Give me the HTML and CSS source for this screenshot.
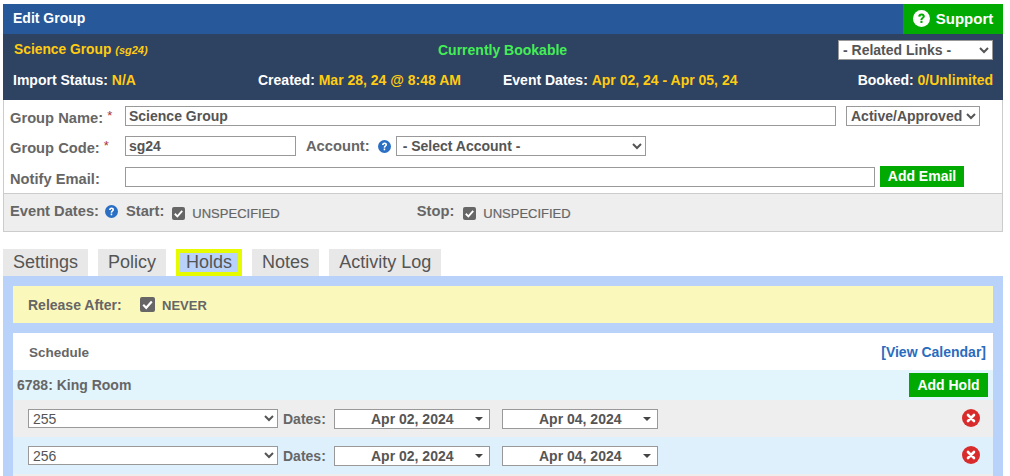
FILE: index.html
```html
<!DOCTYPE html>
<html lang="en">
<head>
    <meta charset="UTF-8">
    <title>Edit Group</title>
    <link rel="stylesheet" href="styles.css">
</head>
<body>
    <div class="page">
        <div class="title-bar">
            <span class="title">Edit Group</span>
            <a class="support">
                <svg class="support-icon" viewBox="0 0 16 16"><circle cx="8" cy="8" r="8" fill="#fff"/><path d="M4.900 6.200c0-1.900 1.400-2.900 3.200-2.900s3 1.100 3 2.600c0 2.100-2.200 2-2.200 3.500H7c0-2.400 2.100-2.300 2.100-3.400 0-.5-.4-.9-1-.9-.7 0-1.100.4-1.100 1.200zM7 10.200h1.900v2H7z" fill="#00aa00"/></svg>
                Support
            </a>
        </div>
        <div class="info">
            <div class="info-top">
                <div class="group-title">Science Group <i>(sg24)</i></div>
                <div class="bookable">Currently Bookable</div>
                <select class="related"><option>- Related Links -</option></select>
            </div>
            <div class="info-bottom">
                <span class="import">Import Status: <b>N/A</b></span>
                <span class="created">Created: <b>Mar 28, 24 @ 8:48 AM</b></span>
                <span class="dates">Event Dates: <b>Apr 02, 24 - Apr 05, 24</b></span>
                <span class="booked">Booked: <b>0/Unlimited</b></span>
            </div>
        </div>
        <div class="form">
            <div class="row row-name">
                <label class="lbl">Group Name: <span class="req">*</span></label>
                <input class="txt name-input" type="text" value="Science Group">
                <select class="status"><option>Active/Approved</option></select>
            </div>
            <div class="row row-code">
                <label class="lbl">Group Code: <span class="req">*</span></label>
                <input class="txt code-input" type="text" value="sg24">
                <label class="account-lbl">Account:</label>
                <svg class="help" viewBox="0 0 16 16"><use href="#help-icon"/></svg>
                <select class="account"><option>- Select Account -</option></select>
            </div>
            <div class="row row-email">
                <label class="lbl">Notify Email:</label>
                <input class="txt email-input" type="text">
                <button class="btn add-email">Add Email</button>
            </div>
        </div>
        <div class="event-dates">
            <span class="ev-lbl">Event Dates:</span>
            <svg class="help help-ev" viewBox="0 0 16 16"><use href="#help-icon"/></svg>
            <span class="start-lbl">Start:</span>
            <span class="check"><svg viewBox="0 0 14 14"><use href="#check-icon"/></svg></span>
            <span class="unspec start-unspec">UNSPECIFIED</span>
            <span class="stop-lbl">Stop:</span>
            <span class="check"><svg viewBox="0 0 14 14"><use href="#check-icon"/></svg></span>
            <span class="unspec">UNSPECIFIED</span>
        </div>

        <div class="tabs">
            <a class="tab">Settings</a>
            <a class="tab">Policy</a>
            <a class="tab active">Holds</a>
            <a class="tab">Notes</a>
            <a class="tab">Activity Log</a>
        </div>
        <div class="panel">
            <div class="release">
                <span class="release-lbl">Release After:</span>
                <span class="check check-lg"><svg viewBox="0 0 14 14"><use href="#check-icon"/></svg></span>
                <span class="unspec">NEVER</span>
            </div>
            <div class="schedule">
                <div class="schedule-head">
                    <span>Schedule</span>
                    <a class="cal-link">[View Calendar]</a>
                </div>
                <div class="room">
                    <span>6788: King Room</span>
                    <button class="btn add-hold">Add Hold</button>
                </div>
                <div class="hold hold-grey">
                    <select class="hold-select"><option>255</option></select>
                    <span class="dates-lbl">Dates:</span>
                    <div class="date">Apr 02, 2024<span class="caret"></span></div>
                    <div class="date">Apr 04, 2024<span class="caret"></span></div>
                    <svg class="del" viewBox="0 0 18 18"><use href="#del-icon"/></svg>
                </div>
                <div class="hold hold-blue">
                    <select class="hold-select"><option>256</option></select>
                    <span class="dates-lbl">Dates:</span>
                    <div class="date">Apr 02, 2024<span class="caret"></span></div>
                    <div class="date">Apr 04, 2024<span class="caret"></span></div>
                    <svg class="del" viewBox="0 0 18 18"><use href="#del-icon"/></svg>
                </div>
                <div class="hold-end"></div>
            </div>
        </div>
    </div>

    <svg class="defs" width="0" height="0">
        <defs>
            <g id="help-icon"><circle cx="8" cy="8" r="8" fill="#2a6fc4"/><path d="M4.900 6.100c0-1.900 1.400-3 3.200-3s3 1.100 3 2.700c0 2.100-2.200 2-2.200 3.600H7c0-2.500 2.100-2.400 2.100-3.500 0-.5-.4-.9-1-.9-.7 0-1.100.4-1.100 1.200zM7 10.400h1.900v2.200H7z" fill="#fff"/></g>
            <g id="check-icon"><path d="M3 7.300l2.800 2.800L11 4.200" fill="none" stroke="#fff" stroke-width="2"/></g>
            <g id="del-icon"><circle cx="9" cy="9" r="9" fill="#d82c2c"/><path d="M6 6l6 6M12 6l-6 6" stroke="#fff" stroke-width="2.600" stroke-linecap="round"/></g>
        </defs>
    </svg>
</body>
</html>
```

FILE: styles.css
```css
html, body {
    margin: 0;
    padding: 0;
    background: #fff;
    overflow: hidden;
    height: 476px;
}
body {
    font-family: "Liberation Sans", Arial, sans-serif;
    font-size: 14px;
    color: #666;
}
.defs {
    position: absolute;
}
.page {
    width: 1000px;
    height: 472px;
    margin: 0 0 0 3px;
    padding-top: 4px;
}
select, input, button {
    font-family: "Liberation Sans", Arial, sans-serif;
    box-sizing: border-box;
    margin: 0;
}
.title-bar {
    height: 30px;
    background: #27589a;
    display: flex;
    justify-content: space-between;
    align-items: center;
    color: #fff;
    font-weight: bold;
}
.title {
    padding-left: 10px;
    padding-bottom: 2px;
}
.support {
    width: 100px;
    height: 30px;
    background: #00aa00;
    display: flex;
    align-items: center;
    justify-content: center;
    gap: 6px;
    font-size: 15px;
    box-sizing: border-box;
    padding-bottom: 1px;
}
.support-icon {
    width: 17px;
    height: 17px;
}
.info {
    height: 66px;
    background: #2e4262;
    color: #fff;
    font-weight: bold;
    box-sizing: border-box;
    padding: 6px 10px 0 10px;
}
.info-top {
    display: flex;
    align-items: center;
    height: 20px;
}
.group-title {
    color: #ffcc11;
    width: 425px;
    padding-left: 1px;
    padding-bottom: 1px;
    box-sizing: border-box;
    font-size: 13.800px;
}
.group-title i {
    font-size: 11px;
}
.bookable {
    color: #44ee55;
    width: 400px;
}
.related {
    width: 155px;
    height: 20px;
    font-size: 14px;
    font-weight: bold;
    color: #555;
    background: #fff;
    border: 1px solid #999;
    border-radius: 0;
    padding: 0;
}
.info-bottom {
    display: flex;
    margin-top: 10px;
    height: 20px;
    align-items: center;
}
.info-bottom b {
    color: #ffcc11;
}
.import {
    width: 245px;
}
.created {
    width: 245px;
}
.dates {
    flex: 1;
}
.form {
    height: 93px;
    box-sizing: border-box;
    border-left: 1px solid #ccc;
    border-right: 1px solid #ccc;
    padding-top: 6px;
    font-weight: bold;
}
.row {
    display: flex;
    align-items: center;
    height: 20px;
}
.row-code {
    margin-top: 10px;
}
.row-email {
    margin-top: 11px;
}
.lbl {
    width: 121px;
    box-sizing: border-box;
    padding-left: 6px;
    padding-top: 3px;
    font-size: 14.700px;
    white-space: nowrap;
}
.req {
    color: #a33;
    font-size: 13px;
    font-weight: normal;
    position: relative;
    top: -3px;
}
.txt {
    height: 20px;
    border: 1px solid #999;
    padding: 0 3px;
    font-size: 14px;
    font-weight: bold;
    color: #555;
    border-radius: 0;
    outline: none;
}
.name-input {
    width: 711px;
}
.status {
    width: 134px;
    height: 20px;
    margin-left: 10px;
    font-size: 14px;
    font-weight: bold;
    color: #555;
    background: #fff;
    border: 1px solid #999;
    border-radius: 0;
    padding: 0;
}
.code-input {
    width: 171px;
}
.account-lbl {
    margin-left: 10px;
    font-size: 14.700px;
}
.help {
    width: 13px;
    height: 13px;
    margin-left: 8px;
    flex: none;
}
.account {
    width: 250px;
    height: 20px;
    margin-left: 5px;
    font-size: 14px;
    font-weight: bold;
    color: #555;
    background: #fff;
    border: 1px solid #999;
    border-radius: 0;
    padding: 0 2px;
}
.email-input {
    width: 750px;
}
.btn {
    background: #00aa00;
    color: #fff;
    border: none;
    font-size: 14px;
    font-weight: bold;
    border-radius: 0;
    padding: 0;
}
.add-email {
    width: 84px;
    height: 21px;
    margin-left: 5px;
    margin-top: -2px;
}
.event-dates {
    height: 39px;
    background: #eee;
    border: 1px solid #ccc;
    box-sizing: border-box;
    display: flex;
    align-items: center;
    font-weight: bold;
    font-size: 14.700px;
    padding-left: 6px;
    padding-bottom: 3px;
}
.help-ev {
    margin-left: 6px;
}
.start-lbl {
    margin-left: 8px;
}
.stop-lbl {
    margin-left: 137px;
    margin-right: 1px;
}
.check {
    width: 13px;
    height: 13px;
    background: #666;
    border-radius: 2px;
    display: inline-block;
    margin-left: 8px;
    margin-right: 7px;
    margin-top: 4px;
    flex: none;
}
.check svg {
    display: block;
    width: 100%;
    height: 100%;
}
.unspec {
    font-weight: normal;
    font-size: 13px;
    -webkit-text-stroke: 0.2px #666;
    margin-top: 4px;
}
.tabs {
    display: flex;
    margin-top: 17px;
    height: 27px;
    gap: 10px;
}
.tab {
    background: #e8e8e8;
    color: #555;
    font-size: 18px;
    height: 27px;
    box-sizing: border-box;
    line-height: 27px;
    padding: 0 10px;
}
.tab.active {
    background: #b9d2fa;
    border: 4px solid #e6fa00;
    line-height: 19px;
    padding: 0 6px;
}
.panel {
    background: #b9d2fa;
    padding: 10px 10px 0 10px;
    height: 200px;
    box-sizing: border-box;
}
.release {
    height: 37px;
    background: #fbf8bb;
    display: flex;
    align-items: center;
    font-weight: bold;
    padding-left: 15px;
    font-size: 14px;
}
.release-lbl {
    width: 112px;
    padding-top: 1px;
}
.check-lg {
    width: 15px;
    height: 15px;
    margin: 0 6px 0 0;
}
.release .unspec {
    font-weight: bold;
    -webkit-text-stroke: 0;
    margin: 1px 0 0 1px;
    font-size: 13px;
}
.schedule {
    margin-top: 10px;
    background: #fff;
    font-weight: bold;
    font-size: 13.500px;
}
.schedule-head {
    height: 37px;
    display: flex;
    justify-content: space-between;
    align-items: center;
    padding: 1px 7px 0 16px;
    box-sizing: border-box;
}
.cal-link {
    color: #2a6cbd;
    font-size: 14px;
}
.room {
    height: 30px;
    background: #e2f4fc;
    display: flex;
    justify-content: space-between;
    align-items: center;
    padding: 0 5px 0 4px;
    font-size: 14px;
}
.add-hold {
    width: 79px;
    height: 24px;
    font-size: 14px;
    margin-top: -1px;
}
.hold {
    height: 37px;
    display: flex;
    align-items: center;
    padding-left: 15px;
    box-sizing: border-box;
}
.hold-grey {
    background: #eee;
}
.hold-blue {
    background: #dff0fd;
}
.hold-end {
    height: 2px;
    background: #eee;
}
.hold-select {
    width: 250px;
    height: 19px;
    font-size: 14px;
    color: #555;
    background: #fff;
    border: 1px solid #999;
    border-radius: 0;
    padding: 0;
    margin-top: -1px;
}
.dates-lbl {
    margin-left: 5px;
    width: 51px;
    font-size: 14px;
}
.date {
    width: 156px;
    height: 20px;
    box-sizing: border-box;
    background: #fff;
    border: 1px solid #999;
    margin-right: 12px;
    color: #555;
    font-size: 14px;
    line-height: 18px;
    padding-left: 36px;
    position: relative;
}
.caret {
    position: absolute;
    right: 6px;
    top: 7px;
    width: 0;
    height: 0;
    border-left: 4px solid transparent;
    border-right: 4px solid transparent;
    border-top: 4px solid #444;
}
.del {
    width: 18px;
    height: 18px;
    margin-left: 292px;
    margin-top: -1px;
}
```
